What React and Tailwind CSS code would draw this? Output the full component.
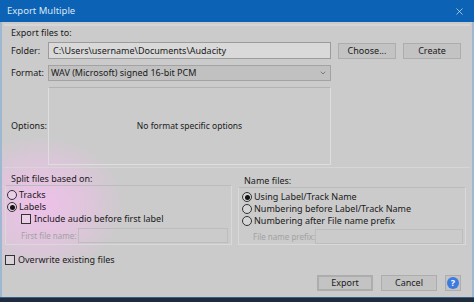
import React from "react";
import { ChevronDown, X } from "lucide-react";

function Radio({ checked, label }) {
  return (
    <div className="flex items-center h-[12px] gap-[2px] whitespace-nowrap">
      <span className="w-[10px] h-[10px] rounded-full border border-[#333] bg-white/20 flex items-center justify-center">
        {checked && <span className="w-[5px] h-[5px] rounded-full bg-[#111]" />}
      </span>
      <span>{label}</span>
    </div>
  );
}

function Check({ label }) {
  return (
    <div className="flex items-center h-[12px] gap-[3px] whitespace-nowrap">
      <span className="w-[10px] h-[10px] border border-[#333] bg-white/20" />
      <span>{label}</span>
    </div>
  );
}

function Button({ children, className = "" }) {
  return (
    <div
      className={`h-[16px] flex items-center justify-center bg-[#c3c3c3] border border-[#adadad] ${className}`}
    >
      {children}
    </div>
  );
}

export default function App() {
  return (
    <div className="relative w-[474px] h-[302px] overflow-hidden bg-[#cbcbcb] text-[9px] leading-[12px] text-[#1a1a1a] font-['Noto_Sans',sans-serif] flex flex-col">
      {/* pink glow, sits behind the controls */}
      <div className="absolute left-[-45px] top-[135px] w-[170px] h-[140px] rounded-full bg-[radial-gradient(closest-side,rgba(248,190,242,0.8),rgba(246,190,240,0.45)_55%,rgba(246,190,240,0)_100%)] pointer-events-none" />

      {/* title bar */}
      <div className="relative h-[22px] bg-[#0c62b4] flex items-center justify-between pl-[7px] pr-[9px] text-[#dbe7f4] text-[9.5px]">
        <span>Export Multiple</span>
        <X className="w-[11px] h-[11px] text-[#dbe7f4]" strokeWidth={1.5} />
      </div>

      <div className="relative flex-1 flex flex-col border-l-2 border-r-2 border-[#9fb8d2]">
        {/* export files to */}
        <div className="mt-[2px] mx-[2px] h-[144px] border-t-2 border-b border-[#d6d6d6] pl-[7px] pr-[3px]">
          <div className="h-[12px] mt-[1px]">Export files to:</div>
          <div className="flex items-center mt-[3px] h-[17px]">
            <span className="w-[37px]">Folder:</span>
            <div className="w-[283px] h-[17px] bg-[#d9d9d9] border border-[#9b9b9b] flex items-center pl-[4px]">
              C:\Users\username\Documents\Audacity
            </div>
            <Button className="w-[58px] ml-[7px]">Choose...</Button>
            <Button className="w-[58px] ml-[7px]">Create</Button>
          </div>
          <div className="flex items-center mt-[6px] h-[16px]">
            <span className="w-[37px]">Format:</span>
            <div className="w-[283px] h-[16px] bg-[#c1c1c1] border border-[#a3a3a3] flex items-center justify-between pl-[2px] pr-[3px]">
              <span>WAV (Microsoft) signed 16-bit PCM</span>
              <ChevronDown className="w-[8px] h-[8px] text-[#555]" strokeWidth={2} />
            </div>
          </div>
          <div className="flex items-center mt-[6px]">
            <span className="w-[37px]">Options:</span>
            <div className="w-[283px] h-[78px] border border-[#dedede] border-t-[#b3b3b3] flex items-center justify-center text-[8.5px]">
              No format specific options
            </div>
          </div>
        </div>

        {/* split / name */}
        <div className="flex mt-[5px] px-[3px] gap-[6px]">
          <div className="w-[227px]">
            <div className="h-[12px] pl-[6px]">Split files based on:</div>
            <div className="h-[60px] border border-[#d9d9d9] border-t-[#bcbcbc] pt-[3px] pl-[1px] pr-[3px]">
              <Radio label="Tracks" />
              <Radio checked label="Labels" />
              <div className="pl-[14px]">
                <Check label="Include audio before first label" />
              </div>
              <div className="flex items-center mt-[3px] h-[15px] pl-[14px] gap-[3px] text-[#a2a2a2] text-[8px] whitespace-nowrap">
                <span className="w-[54px]">First file name:</span>
                <div className="flex-1 h-[15px] border border-[#bdbdbd]" />
              </div>
            </div>
          </div>
          <div className="w-[228px]">
            <div className="h-[12px] pl-[6px] mt-[2px]">Name files:</div>
            <div className="h-[58px] border border-[#d9d9d9] border-t-[#bcbcbc] pt-[3px] pl-[3px] pr-[2px]">
              <Radio checked label="Using Label/Track Name" />
              <Radio label="Numbering before Label/Track Name" />
              <Radio label="Numbering after File name prefix" />
              <div className="flex items-center mt-[2px] h-[15px] pl-[11px] gap-[3px] text-[#a2a2a2] text-[8px] whitespace-nowrap">
                <span className="w-[59px]">File name prefix:</span>
                <div className="flex-1 h-[15px] border border-[#bdbdbd]" />
              </div>
            </div>
          </div>
        </div>

        <div className="mt-[9px] pl-[3px]">
          <Check label="Overwrite existing files" />
        </div>

        <div className="flex justify-end items-center mt-[9px] pr-[11px] gap-[8px]">
          <Button className="w-[56px] border-2 border-[#2e6fb5]">Export</Button>
          <Button className="w-[56px]">Cancel</Button>
          <div className="w-[16px] h-[16px] bg-[#c3c3c3] border border-[#adadad] flex items-center justify-center">
            <span className="w-[12px] h-[12px] rounded-full bg-[#3b7be0] text-white text-[9px] font-bold leading-[12px] text-center">
              ?
            </span>
          </div>
        </div>
      </div>

      <div className="relative h-[5px] bg-[#1e2c3f] border-t border-[#3b5d86]" />
    </div>
  );
}
